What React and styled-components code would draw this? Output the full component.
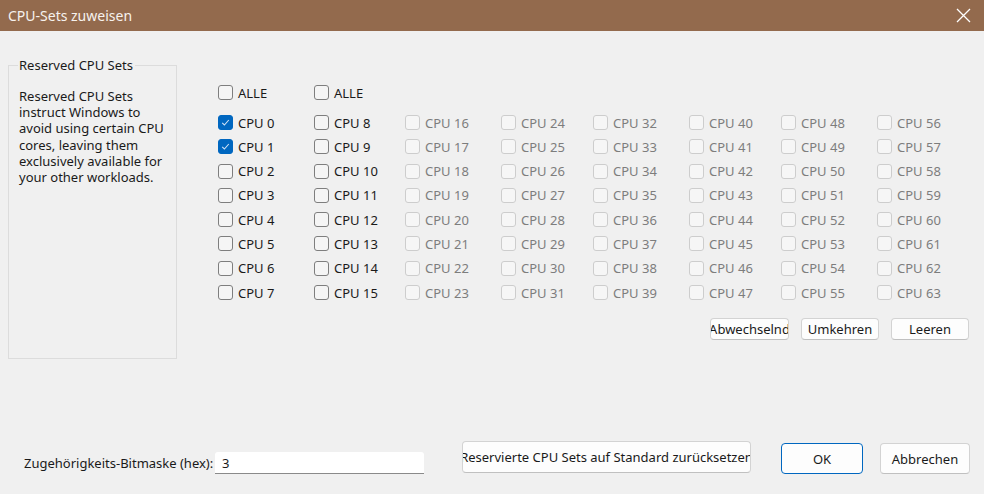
import React from 'react';
import styled, { createGlobalStyle } from 'styled-components';

const GlobalStyle = createGlobalStyle`
  html, body {
    margin: 0;
    padding: 0;
    background: #f0f0f0;
  }
  body {
    font-family: "Noto Sans", "Open Sans", sans-serif;
    font-size: 13px;
    color: #1a1a1a;
  }
`;

const Window = styled.div`
  width: 984px;
  height: 494px;
  display: flex;
  flex-direction: column;
  background: #f0f0f0;
  overflow: hidden;
`;

const TitleBar = styled.div`
  height: 31px;
  flex: none;
  background: #936a4d;
  display: flex;
  align-items: center;
  justify-content: space-between;
  padding: 0 13px 0 8px;
  color: #f7f2ee;
  font-size: 14px;
`;

const CloseIcon = () => (
  <svg width="15" height="15" viewBox="0 0 15 15">
    <path d="M1 1 L14 14 M14 1 L1 14" stroke="#ffffff" strokeWidth="1.3" fill="none" />
  </svg>
);

const Body = styled.div`
  flex: 1;
  display: flex;
  flex-direction: column;
`;

const Main = styled.div`
  display: flex;
  box-sizing: border-box;
  padding: 25px 0 0 8px;
  height: 400px;
  flex: none;
`;

const GroupBox = styled.fieldset`
  width: 169px;
  height: 303px;
  box-sizing: border-box;
  margin: 0;
  padding: 0 0 0 9px;
  border: 1px solid #dcdcdc;
  flex: none;
`;

const Legend = styled.legend`
  padding: 0 2px 0 1px;
  font-size: 13px;
  color: #1a1a1a;
`;

const Description = styled.p`
  margin: 14px 0 0 1px;
  line-height: 16.2px;
  width: 150px;
`;

const Right = styled.div`
  display: flex;
  flex-direction: column;
  margin-left: 41px;
  padding-top: 29px;
  flex: 1;
`;

const Grid = styled.div`
  display: grid;
  grid-template-columns: 96px 91px 96px 92px 96px 92px 96px 90px;
  grid-template-rows: 30px;
  grid-auto-rows: 24.3px;
`;

const AllRow = styled.div`
  grid-column: 1 / -1;
  display: grid;
  grid-template-columns: 96px 91px;
  align-items: start;
`;

const Item = styled.label`
  display: flex;
  align-items: center;
  gap: 5px;
  height: 15px;
  white-space: nowrap;
  color: ${p => (p.$disabled ? '#7d7d7d' : '#1a1a1a')};
`;

const Box = styled.span`
  width: 13px;
  height: 13px;
  flex: none;
  border-radius: 3px;
  display: flex;
  align-items: center;
  justify-content: center;
  border: 1px solid ${p => (p.$checked ? '#0067c0' : p.$disabled ? '#cdcdcd' : '#7e7e7e')};
  background: ${p => (p.$checked ? '#0067c0' : p.$disabled ? '#f6f6f6' : '#f5f5f5')};
`;

const Check = () => (
  <svg width="9" height="9" viewBox="0 0 9 9">
    <path d="M1.2 4.8 L3.4 7 L7.8 2" stroke="#cfe2f5" strokeWidth="1.1" fill="none" />
  </svg>
);

const ButtonRow = styled.div`
  display: flex;
  justify-content: flex-end;
  gap: 12px;
  margin-top: 9px;
  padding-right: 15px;
`;

const Button = styled.button`
  width: ${p => p.$w}px;
  height: ${p => p.$h || 22}px;
  margin-top: ${p => p.$top || 0}px;
  flex: none;
  box-sizing: border-box;
  display: flex;
  align-items: center;
  justify-content: center;
  overflow: hidden;
  white-space: nowrap;
  padding: 0;
  font-family: inherit;
  font-size: 13px;
  color: #1a1a1a;
  background: #fdfdfd;
  border: 1px solid ${p => (p.$primary ? '#0067c0' : '#d3d3d3')};
  border-bottom-color: ${p => (p.$primary ? '#0067c0' : '#c0c0c0')};
  border-radius: 4px;
`;

const Footer = styled.div`
  display: flex;
  align-items: flex-start;
  padding: 10px 0 0 24px;
`;

const FieldLabel = styled.span`
  width: 191px;
  flex: none;
  margin-top: 13px;
  white-space: nowrap;
`;

const Input = styled.div`
  width: 209px;
  height: 22px;
  flex: none;
  box-sizing: border-box;
  margin-top: 11px;
  padding: 0 0 0 7px;
  display: flex;
  align-items: center;
  background: #ffffff;
  border-bottom: 1px solid #8a8a8a;
  border-radius: 3px 3px 0 0;
`;

const Spacer = styled.div`
  width: ${p => p.$w}px;
  flex: none;
`;

const cols = Array.from({ length: 8 }, (_, c) => c);
const rows = Array.from({ length: 8 }, (_, r) => r);

const CheckItem = ({ label, checked, disabled }) => (
  <Item $disabled={disabled}>
    <Box $checked={checked} $disabled={disabled}>{checked && <Check />}</Box>
    {label}
  </Item>
);

export default function App() {
  return (
    <>
      <GlobalStyle />
      <Window>
        <TitleBar>
          <span>CPU-Sets zuweisen</span>
          <CloseIcon />
        </TitleBar>
        <Body>
          <Main>
            <GroupBox>
              <Legend>Reserved CPU Sets</Legend>
              <Description>
                Reserved CPU Sets instruct Windows to avoid using certain CPU cores, leaving them exclusively available for your other workloads.
              </Description>
            </GroupBox>
            <Right>
              <Grid>
                <AllRow>
                  <CheckItem label="ALLE" />
                  <CheckItem label="ALLE" />
                </AllRow>
                {rows.map(r =>
                  cols.map(c => {
                    const n = c * 8 + r;
                    return (
                      <CheckItem
                        key={n}
                        label={`CPU ${n}`}
                        checked={n < 2}
                        disabled={n >= 16}
                      />
                    );
                  })
                )}
              </Grid>
              <ButtonRow>
                <Button $w={79}>Abwechselnd</Button>
                <Button $w={78}>Umkehren</Button>
                <Button $w={78}>Leeren</Button>
              </ButtonRow>
            </Right>
          </Main>
          <Footer>
            <FieldLabel>Zugehörigkeits-Bitmaske (hex):</FieldLabel>
            <Input>3</Input>
            <Spacer $w={38} />
            <Button $w={289} $h={32}>Reservierte CPU Sets auf Standard zurücksetzen</Button>
            <Spacer $w={30} />
            <Button $w={82} $h={31} $top={2} $primary>OK</Button>
            <Spacer $w={17} />
            <Button $w={90} $h={31} $top={2}>Abbrechen</Button>
          </Footer>
        </Body>
      </Window>
    </>
  );
}
